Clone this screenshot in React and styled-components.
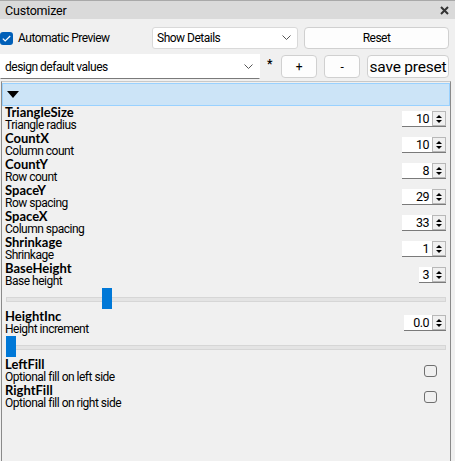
import React from "react";
import styled, { createGlobalStyle } from "styled-components";

const Global = createGlobalStyle`
  html, body { margin: 0; padding: 0; background: #f0f0f0; }
  body { font-family: Roboto, "Open Sans", sans-serif; color: #000; letter-spacing: -0.5px; }
`;

const Frame = styled.div`
  width: 455px;
  height: 461px;
  background: #f0f0f0;
  display: flex;
  flex-direction: column;
  overflow: hidden;
`;

const TitleBar = styled.div`
  height: 18px;
  border-top: 1px solid #a9a9a9;
  background: #dadada;
  display: flex;
  align-items: center;
  justify-content: space-between;
  padding: 0 6px 0 5px;
  font-size: 12.5px;
  letter-spacing: -0.2px;
`;

const Toolbar = styled.div`
  display: flex;
  align-items: center;
  gap: ${(p) => p.$gap || 6}px;
  padding: 0 6px 0 0;
  height: ${(p) => p.$h}px;
  margin-top: ${(p) => p.$mt || 0}px;
`;

const Check = styled.span`
  width: 13px;
  height: 13px;
  border-radius: 3px;
  flex: none;
  box-sizing: border-box;
  display: inline-flex;
  align-items: center;
  justify-content: center;
  background: #005fb8;
`;

const CheckLabel = styled.label`
  display: flex;
  align-items: center;
  gap: 5px;
  font-size: 12px;
  width: 146px;
`;

const Combo = styled.div`
  box-sizing: border-box;
  width: ${(p) => p.$w}px;
  height: ${(p) => p.$h}px;
  background: #fff;
  border: 1px solid ${(p) => (p.$flat ? "#fff" : "#d9d9d9")};
  border-bottom-color: ${(p) => (p.$flat ? "#7a7a7a" : "#d9d9d9")};
  border-radius: ${(p) => (p.$flat ? 0 : 3)}px;
  display: flex;
  align-items: center;
  justify-content: space-between;
  padding: 0 6px 0 4px;
  font-size: 12px;
`;

const Button = styled.button`
  box-sizing: border-box;
  width: ${(p) => p.$w}px;
  height: ${(p) => p.$h || 22}px;
  background: #fdfdfd;
  border: 1px solid #d0d0d0;
  border-radius: 4px;
  font-family: inherit;
  letter-spacing: ${(p) => (p.$fs ? "-0.2px" : "inherit")};
  font-size: ${(p) => p.$fs || 12}px;
  white-space: nowrap;
  color: #000;
  padding: 0;
  flex: none;
`;

const Star = styled.span`
  font-size: 12px;
  font-weight: 700;
  margin: -6px 2px 0 0;
`;

const Panel = styled.div`
  flex: 1;
  margin: 2px 4px 0 1px;
  border-left: 1px solid #8a8a8a;
  border-right: 1px solid #8a8a8a;
  border-top: 1px solid #c8c8c8;
  display: flex;
  flex-direction: column;
`;

const GroupHeader = styled.div`
  height: 21px;
  margin-top: 1px;
  background: #cce4f7;
  border: 1px solid #99d1ff;
  display: flex;
  align-items: center;
  padding-left: 4px;
`;

const Row = styled.div`
  height: 26px;
  display: flex;
  align-items: center;
  justify-content: space-between;
  padding: 0 4px 0 3px;
`;

const Label = styled.div`
  display: flex;
  flex-direction: column;
  font-size: 12px;
  line-height: 13px;
`;

const Name = styled.span`
  font-family: Lato, Roboto, sans-serif;
  font-weight: 700;
  font-size: 13px;
  letter-spacing: 0;
`;

const Spin = styled.div`
  display: flex;
  align-items: center;
  height: 15px;
  border-bottom: 1px solid #7a7a7a;
  background: #fff;
`;

const SpinField = styled.div`
  width: ${(p) => p.$w}px;
  text-align: right;
  font-size: 12.5px;
  line-height: 15px;
  padding-right: 3px;
  box-sizing: border-box;
`;

const SpinButtons = styled.div`
  box-sizing: border-box;
  width: 14px;
  height: 15px;
  border: 1px solid #b8b8b8;
  background: #f0f0f0;
  display: flex;
  flex-direction: column;
  align-items: center;
  justify-content: center;
  gap: 2px;
`;

const Arrow = styled.span`
  width: 0;
  height: 0;
  border-left: 3px solid transparent;
  border-right: 3px solid transparent;
  ${(p) => (p.$down ? "border-top: 3px solid #000;" : "border-bottom: 3px solid #000;")}
`;

const SliderRow = styled.div`
  height: 22px;
  position: relative;
  display: flex;
  align-items: center;
  padding: 0 4px;
`;

const Track = styled.div`
  flex: 1;
  height: 3px;
  background: #e4e4e4;
  border: 1px solid #d6d6d6;
`;

const Thumb = styled.div`
  position: absolute;
  top: 0;
  width: 10px;
  height: 21px;
  background: #0078d7;
`;

const Box = styled.span`
  width: 13px;
  height: 12px;
  box-sizing: border-box;
  border: 1px solid #6f6f6f;
  border-radius: 3px;
  margin-right: 9px;
`;

const params = [
  ["TriangleSize", "Triangle radius", "10", 30],
  ["CountX", "Column count", "10", 30],
  ["CountY", "Row count", "8", 30],
  ["SpaceY", "Row spacing", "29", 30],
  ["SpaceX", "Column spacing", "33", 30],
  ["Shrinkage", "Shrinkage", "1", 30],
  ["BaseHeight", "Base height", "3", 13, 96],
  ["HeightInc", "Height increment", "0.0", 28, 0],
];

const Chevron = () => (
  <svg width="9" height="6" viewBox="0 0 9 6">
    <path d="M0.5 0.5 L4.5 4.5 L8.5 0.5" fill="none" stroke="#555" strokeWidth="1" />
  </svg>
);

function SpinBox({ value, w }) {
  return (
    <Spin>
      <SpinField $w={w}>{value}</SpinField>
      <SpinButtons>
        <Arrow />
        <Arrow $down />
      </SpinButtons>
    </Spin>
  );
}

export default function App() {
  return (
    <Frame>
      <Global />
      <TitleBar>
        <span>Customizer</span>
        <svg width="9" height="9" viewBox="0 0 9 9">
          <path d="M1 1 L8 8 M8 1 L1 8" stroke="#333" strokeWidth="2" />
        </svg>
      </TitleBar>

      <Toolbar $h={22} $mt={8} $gap={6}>
        <CheckLabel>
          <Check>
            <svg width="9" height="7" viewBox="0 0 9 7">
              <path d="M0.8 3.6 L3.2 6 L8.2 1" fill="none" stroke="#fff" strokeWidth="1.2" />
            </svg>
          </Check>
          Automatic Preview
        </CheckLabel>
        <Combo $w={146} $h={22}>
          <span>Show Details</span>
          <Chevron />
        </Combo>
        <Button $w={145}>Reset</Button>
      </Toolbar>

      <Toolbar $h={25} $mt={5} $gap={7}>
        <Combo $w={263} $h={25} $flat>
          <span>design default values</span>
          <Chevron />
        </Combo>
        <Star>*</Star>
        <Button $w={36} $h={23}>+</Button>
        <Button $w={36} $h={23}>-</Button>
        <Button $w={82} $h={23} $fs={15.5}>save preset</Button>
      </Toolbar>

      <Panel>
        <GroupHeader>
          <svg width="12" height="7" viewBox="0 0 12 7">
            <path d="M0 0 L12 0 L6 7 Z" fill="#000" />
          </svg>
        </GroupHeader>

        {params.map(([name, desc, value, w, thumb]) => (
          <React.Fragment key={name}>
            <Row>
              <Label>
                <Name>{name}</Name>
                <span>{desc}</span>
              </Label>
              <SpinBox value={value} w={w} />
            </Row>
            {thumb !== undefined && (
              <SliderRow>
                <Track />
                <Thumb style={{ left: 4 + thumb }} />
              </SliderRow>
            )}
          </React.Fragment>
        ))}

        <Row>
          <Label>
            <Name>LeftFill</Name>
            <span>Optional fill on left side</span>
          </Label>
          <Box />
        </Row>
        <Row>
          <Label>
            <Name>RightFill</Name>
            <span>Optional fill on right side</span>
          </Label>
          <Box />
        </Row>
      </Panel>
    </Frame>
  );
}
